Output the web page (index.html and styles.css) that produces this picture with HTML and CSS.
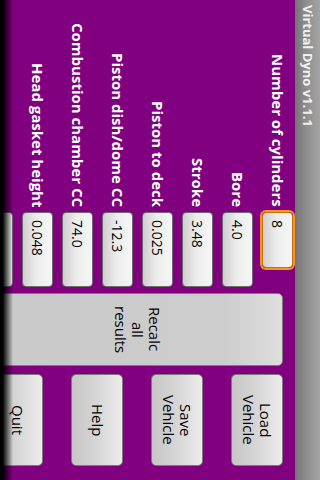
FILE: index.html
```html
<!DOCTYPE html>
<html lang="en">
<head>
<meta charset="UTF-8">
<meta name="viewport" content="width=device-width, initial-scale=1.0">
<title>Virtual Dyno v1.1.1</title>
<link rel="stylesheet" href="styles.css">
</head>
<body>

<div class="titlebar">Virtual Dyno v1.1.1</div>

<div class="main">
    <form class="fields" id="engineForm">
        <label for="cylinders">Number of cylinders</label>
        <input type="text" id="cylinders" class="focused" value="8">

        <label for="bore">Bore</label>
        <input type="text" id="bore" value="4.0">

        <label for="stroke">Stroke</label>
        <input type="text" id="stroke" value="3.48">

        <label for="deck">Piston to deck</label>
        <input type="text" id="deck" value="0.025">

        <label for="dish">Piston dish/dome CC</label>
        <input type="text" id="dish" value="-12.3">

        <label for="chamber">Combustion chamber CC</label>
        <input type="text" id="chamber" value="74.0">

        <label for="gasket">Head gasket height</label>
        <input type="text" id="gasket" value="0.048">

        <!-- next row is scrolled off the screen -->
        <span></span>
        <input type="text" id="gasketBore" aria-label="Head gasket bore" value="">
    </form>

    <button class="recalc" type="submit" form="engineForm">Recalc<br>all<br>results</button>

    <div class="actions">
        <button type="button">Load<br>Vehicle</button>
        <button type="button">Save<br>Vehicle</button>
        <button type="button">Help</button>
        <button type="button">Quit</button>
    </div>
</div>

</body>
</html>
```

FILE: styles.css
```css
/* the app runs in landscape, the phone is held upright */
html {
    writing-mode: vertical-rl;
}
body {
    margin: 0;
    width: 320px;
    height: 480px;
    overflow: hidden;
    background-color: #800080;
    font-family: "Open Sans", sans-serif;
}
.titlebar {
    block-size: 25px;
    line-height: 25px;
    padding-inline-start: 5px;
    background: linear-gradient(to left, #a4a4a4, #8c8c8c 60%, #747474);
    color: #f0f0f0;
    font-size: 13px;
    font-weight: bold;
    white-space: nowrap;
}
.main {
    position: relative;
    display: flex;
    align-items: flex-start;
    block-size: 295px;
    overflow: hidden;
}
/* scroll fade at the end of the list */
.main::after {
    content: "";
    position: absolute;
    top: 0;
    bottom: 0;
    left: 0;
    width: 13px;
    background: linear-gradient(to right, #000 20%, rgba(0, 0, 0, 0));
}
.fields {
    flex: none;
    display: grid;
    grid-template-columns: 212px 75px;
    row-gap: 9px;
    margin: 0;
    padding-block-start: 2px;
}
.fields label {
    align-self: center;
    padding-inline-end: 5px;
    text-align: end;
    color: #fff;
    font-size: 15px;
    font-weight: bold;
    white-space: nowrap;
}
.fields input {
    justify-self: start;
    box-sizing: border-box;
    block-size: 31px;
    inline-size: 75px;
    margin: 0;
    padding: 0;
    padding-inline-start: 7px;
    border: 1px solid #6c6c6c;
    border-radius: 4px;
    background: linear-gradient(to left, #f6f6f6, #ececec 55%, #cfcfcf);
    color: #000;
    font-family: "Open Sans", sans-serif;
    font-size: 14px;
}
.fields input.focused {
    inline-size: 56px;
    border-color: #c67410;
    box-shadow: 0 0 0 2px #f7931e;
    outline: none;
}
button {
    margin: 0;
    padding: 0;
    border: 1px solid #7c7c7c;
    border-radius: 5px;
    background: linear-gradient(to left, #ececec, #d6d6d6 50%, #c6c6c6);
    color: #000;
    font-family: "Open Sans", sans-serif;
    font-size: 15px;
    line-height: 17px;
}
.recalc {
    flex: none;
    inline-size: 73px;
    block-size: 292px;
    margin-block-start: 12px;
    margin-inline-start: 6px;
    background: linear-gradient(to left, #dedede, #cdcdcd 20%, #c9c9c9);
}
.actions {
    flex: none;
    display: flex;
    flex-direction: column;
    gap: 28px;
    margin-block-start: 12px;
    margin-inline-start: 8px;
}
.actions button {
    inline-size: 92px;
    block-size: 52px;
}
```
